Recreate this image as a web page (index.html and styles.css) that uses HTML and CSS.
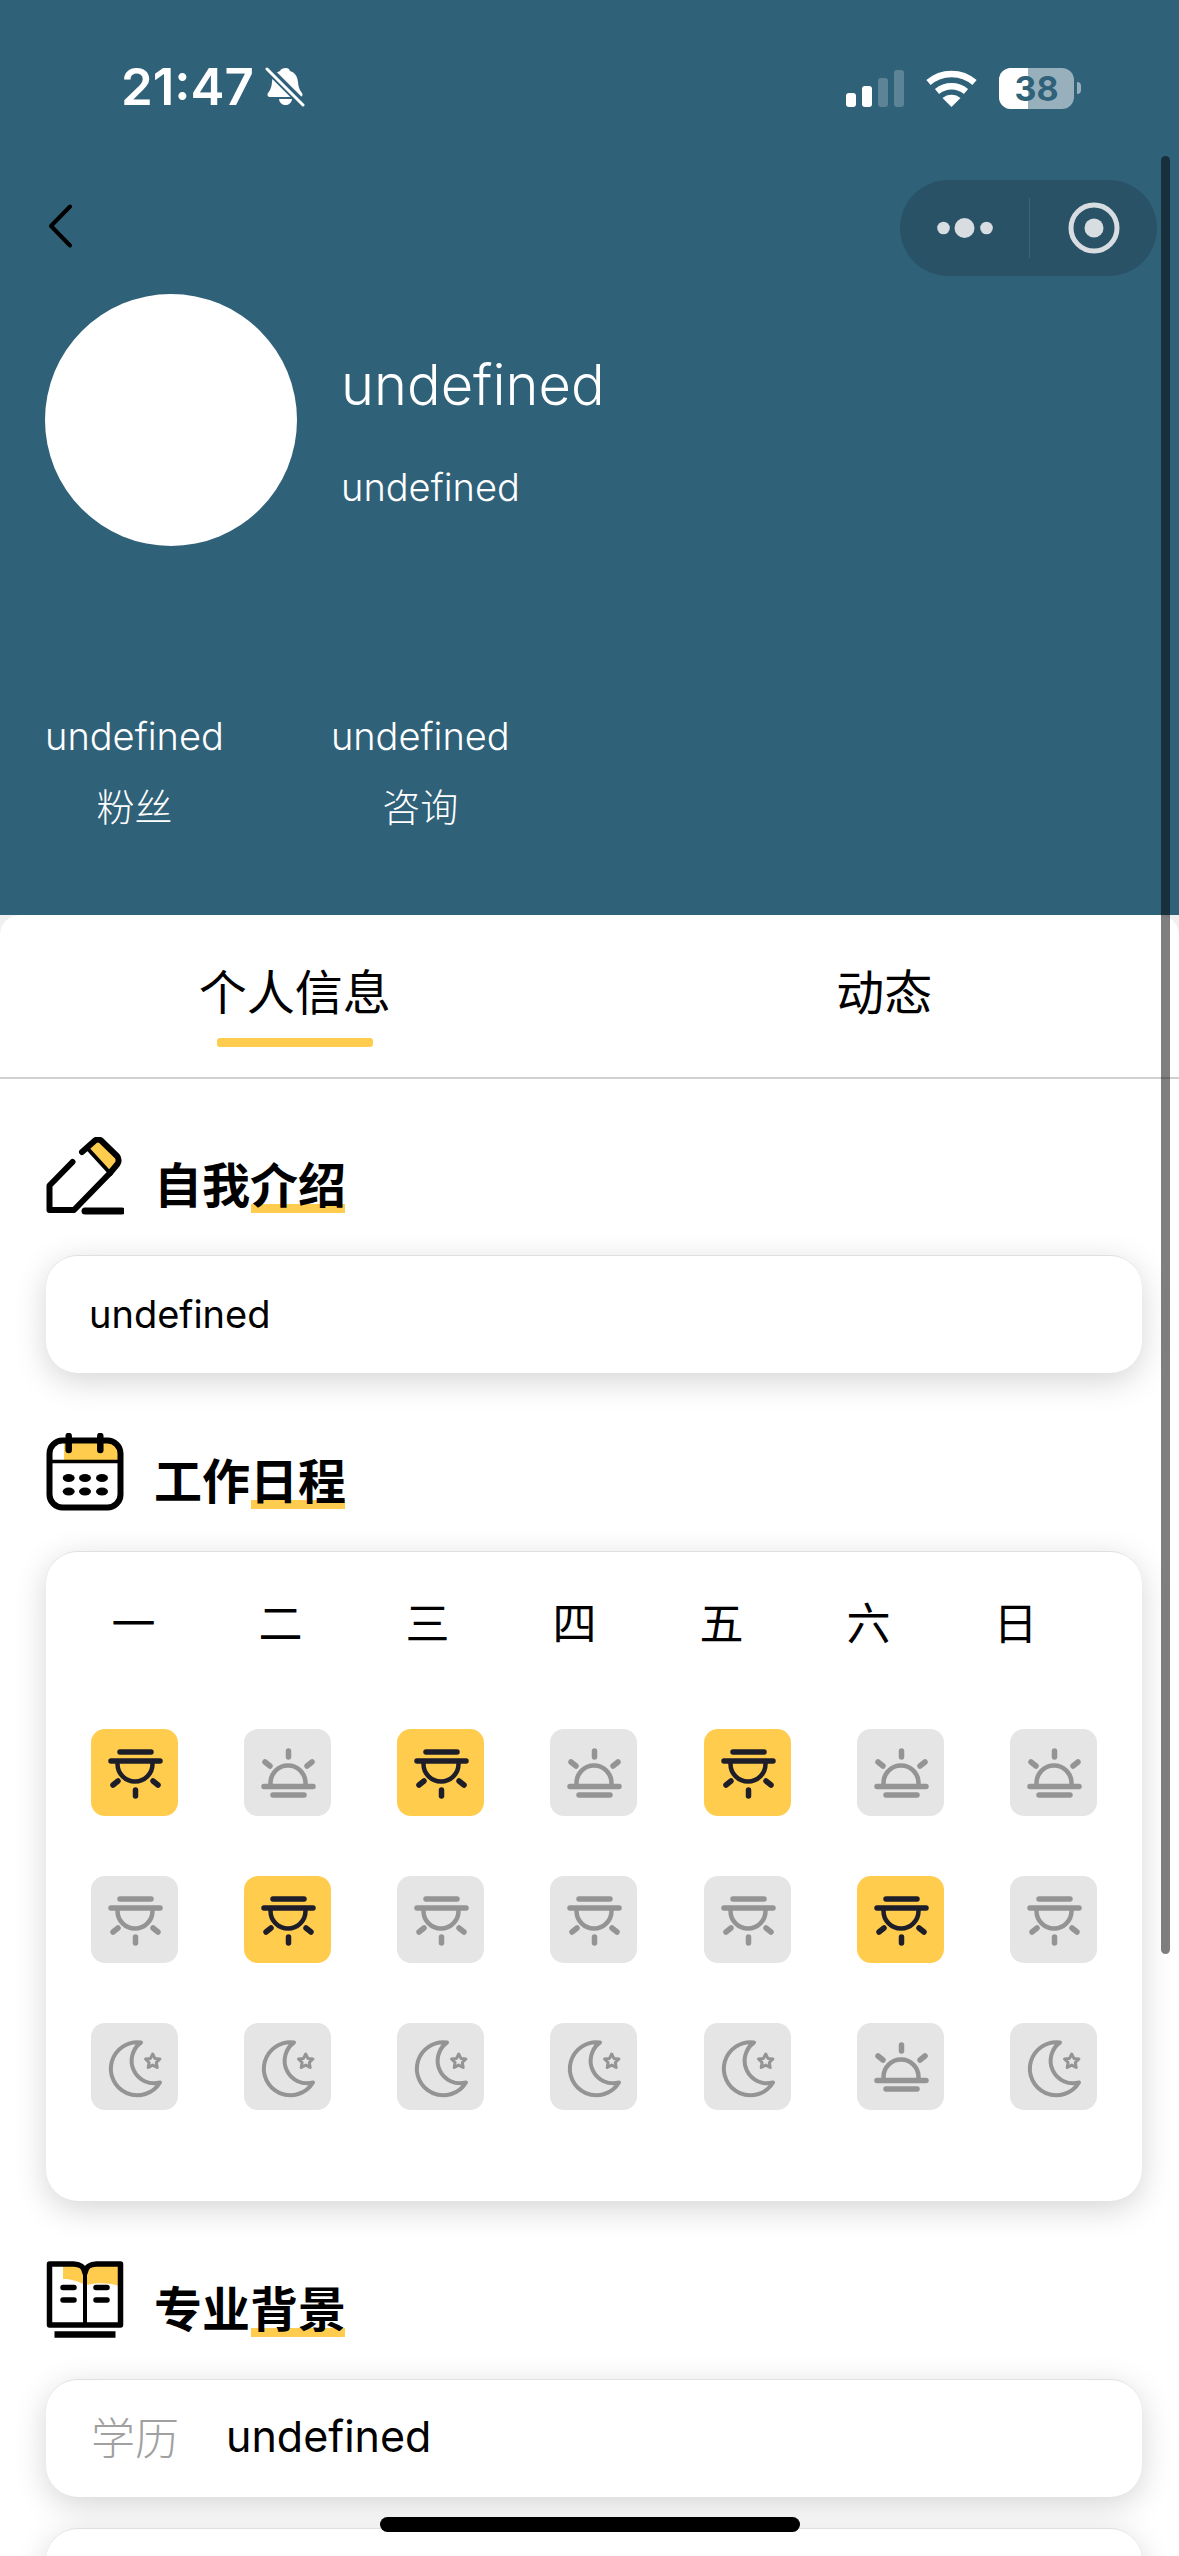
FILE: index.html
```html
<!DOCTYPE html>
<html lang="zh">
<head>
    <meta charset="UTF-8">
    <meta name="viewport" content="width=device-width, initial-scale=1.0">
    <title>undefined</title>
    <link rel="stylesheet" href="styles.css">
</head>
<body>
    <!-- Shared icons for the schedule grid -->
    <svg class="icon-defs" width="0" height="0">
        <symbol id="sunrise" viewBox="0 0 87 87">
            <g fill="none" stroke="currentColor" stroke-width="5.500" stroke-linecap="round">
                <path d="M44.500 22v6M21 33l5 4M68 33l-5 4"/>
                <path d="M26.500 57v-3a17.500 17.500 0 0 1 35 0v3" stroke-width="4.500"/>
                <path d="M20 57.500h49M29 66h31"/>
            </g>
        </symbol>
        <symbol id="sunset" viewBox="0 0 87 87">
            <g fill="none" stroke="currentColor" stroke-width="5.500" stroke-linecap="round">
                <path d="M44.500 61v6M22 56l5-4M67 56l-5-4"/>
                <path d="M26.500 32v3a17.500 17.500 0 0 0 35 0v-3" stroke-width="4.500"/>
                <path d="M20 32h49M29 23h31"/>
            </g>
        </symbol>
        <symbol id="moon" viewBox="0 0 87 87">
            <g fill="none" stroke="currentColor" stroke-width="4" stroke-linejoin="round">
                <path d="M50 19.500A26.500 26.500 0 1 0 69 59.500A22.500 22.500 0 0 1 50 19.500Z"/>
                <path d="M61.700 31l2.200 4.400 5 .6-3.600 3.500.9 5-4.500-2.400-4.500 2.400.9-5-3.600-3.500 5-.6Z" stroke-width="3"/>
            </g>
        </symbol>
    </svg>

    <div class="page">
        <!-- Top colored block -->
        <header class="hero">
            <div class="status">
                <div class="status-left">
                    <span class="time">21:47</span>
                    <svg class="bell" width="40" height="42" viewBox="0 0 40 42">
                        <path fill="#fff" d="M21 2c2 0 3.500 1.200 4 3 5 1.500 7.500 5.500 8 11 .4 5 1.500 8 4 11 1 1.500.5 4-2 4H5c-2.500 0-3-2.500-2-4 2.500-3 3.600-6 4-11 .5-5.500 3-9.500 8-11 .5-1.800 3-3 6-3Z"/>
                        <path fill="#fff" d="M14 33h13c-.5 4-3.500 6-6.500 6s-6-2-6.500-6Z"/>
                        <path stroke="#2f6179" stroke-width="8" d="M1 1l38 38"/>
                        <path stroke="#fff" stroke-width="3" stroke-linecap="round" d="M2 3l36 36"/>
                    </svg>
                </div>
                <div class="status-right">
                    <svg width="58" height="37" viewBox="0 0 58 37">
                        <rect x="0" y="23" width="10" height="14" rx="3" fill="#fff"/>
                        <rect x="16" y="16" width="10" height="21" rx="3" fill="#fff"/>
                        <rect x="32" y="8" width="10" height="29" rx="3" fill="#fff" opacity=".22"/>
                        <rect x="48" y="0" width="10" height="37" rx="3" fill="#fff" opacity=".22"/>
                    </svg>
                    <svg class="wifi" width="51" height="37" viewBox="0 0 51 37">
                        <path fill="none" stroke="#fff" stroke-width="6.500" d="M2.500 12.500C15.500 1 35.500 1 48.500 12.500M11 21.500c8.500-7 20.500-7 29 0"/>
                        <path fill="#fff" d="M25.500 37 16.500 28c5-4.500 13-4.500 18 0Z"/>
                    </svg>
                    <div class="battery">
                        <div class="battery-body">
                            <span class="battery-fill"></span>
                            <span class="battery-num">38</span>
                        </div>
                        <span class="battery-nub"></span>
                    </div>
                </div>
            </div>

            <nav class="nav">
                <svg class="back" width="26" height="44" viewBox="0 0 26 44">
                    <path d="M23 2.500 4 22l19 19.500" fill="none" stroke="#000" stroke-width="4" stroke-linecap="round" stroke-linejoin="round"/>
                </svg>
                <div class="capsule">
                    <svg class="capsule-dots" width="56" height="24" viewBox="0 0 56 24">
                        <circle cx="6.500" cy="12" r="6.300" fill="#d8dde2"/>
                        <circle cx="27.500" cy="12" r="10" fill="#d8dde2"/>
                        <circle cx="49.500" cy="12" r="6.300" fill="#d8dde2"/>
                    </svg>
                    <span class="capsule-line"></span>
                    <svg class="capsule-target" width="52" height="52" viewBox="0 0 52 52">
                        <circle cx="26" cy="26" r="23" fill="none" stroke="#d8dde2" stroke-width="5"/>
                        <circle cx="26" cy="26" r="9.500" fill="#d8dde2"/>
                    </svg>
                </div>
            </nav>

            <div class="profile">
                <div class="avatar"></div>
                <div class="profile-text">
                    <div class="profile-name">undefined</div>
                    <div class="profile-sub">undefined</div>
                </div>
            </div>

            <div class="stats">
                <div class="stat">
                    <div>undefined</div>
                    <div class="stat-label">粉丝</div>
                </div>
                <div class="stat">
                    <div>undefined</div>
                    <div class="stat-label">咨询</div>
                </div>
            </div>
        </header>

        <main class="panel">
            <div class="tabs">
                <div class="tab active"><span>个人信息</span></div>
                <div class="tab"><span>动态</span></div>
            </div>

            <div class="content">
                <!-- 自我介绍 -->
                <section class="section">
                    <div class="section-head">
                        <svg class="section-icon" viewBox="0 0 78 78">
                            <path fill="#ffcc4d" d="M43 11 53 3 72 21l-6 14Z"/>
                            <g fill="none" stroke="#000" stroke-width="6" stroke-linecap="round" stroke-linejoin="round">
                                <path d="M26.500 25 3.500 48.500v24.500h24.500L64 36"/>
                                <path d="M36 15 49 3.500c2-1.500 4-1.500 6 0L71 19c2 2 2 6 .5 8L64 36"/>
                                <path d="M42 12 64 36" stroke-width="4"/>
                            </g>
                            <path d="M39 74h37" stroke="#000" stroke-width="7" stroke-linecap="round"/>
                        </svg>
                        <h3 class="section-title"><span>自我介绍</span></h3>
                    </div>
                    <div class="card text-card">undefined</div>
                </section>

                <!-- 工作日程 -->
                <section class="section">
                    <div class="section-head">
                        <svg class="section-icon" viewBox="0 0 78 78">
                            <path fill="#ffcc4d" d="M18 10h47c5 0 8 3 8 8v10H18Z"/>
                            <rect x="3.500" y="7.500" width="71" height="67" rx="13" fill="none" stroke="#000" stroke-width="6"/>
                            <path d="M3.500 28.500h71" stroke="#000" stroke-width="3.500"/>
                            <path d="M22.700 3v14M54.300 3v14" stroke="#000" stroke-width="6.500" stroke-linecap="round"/>
                            <g fill="#000">
                                <ellipse cx="22.700" cy="45" rx="6" ry="4"/>
                                <ellipse cx="39" cy="45" rx="6" ry="4"/>
                                <ellipse cx="56" cy="45" rx="6" ry="4"/>
                                <ellipse cx="22.700" cy="58.500" rx="6" ry="4"/>
                                <ellipse cx="39" cy="58.500" rx="6" ry="4"/>
                                <ellipse cx="56" cy="58.500" rx="6" ry="4"/>
                            </g>
                        </svg>
                        <h3 class="section-title"><span>工作日程</span></h3>
                    </div>
                    <div class="card schedule">
                        <div class="weekdays">
                            <span>一</span><span>二</span><span>三</span><span>四</span><span>五</span><span>六</span><span>日</span>
                        </div>
                        <div class="slots">
                            <div class="slot on"><svg><use href="#sunset"/></svg></div>
                            <div class="slot"><svg><use href="#sunrise"/></svg></div>
                            <div class="slot on"><svg><use href="#sunset"/></svg></div>
                            <div class="slot"><svg><use href="#sunrise"/></svg></div>
                            <div class="slot on"><svg><use href="#sunset"/></svg></div>
                            <div class="slot"><svg><use href="#sunrise"/></svg></div>
                            <div class="slot"><svg><use href="#sunrise"/></svg></div>

                            <div class="slot"><svg><use href="#sunset"/></svg></div>
                            <div class="slot on"><svg><use href="#sunset"/></svg></div>
                            <div class="slot"><svg><use href="#sunset"/></svg></div>
                            <div class="slot"><svg><use href="#sunset"/></svg></div>
                            <div class="slot"><svg><use href="#sunset"/></svg></div>
                            <div class="slot on"><svg><use href="#sunset"/></svg></div>
                            <div class="slot"><svg><use href="#sunset"/></svg></div>

                            <div class="slot"><svg><use href="#moon"/></svg></div>
                            <div class="slot"><svg><use href="#moon"/></svg></div>
                            <div class="slot"><svg><use href="#moon"/></svg></div>
                            <div class="slot"><svg><use href="#moon"/></svg></div>
                            <div class="slot"><svg><use href="#moon"/></svg></div>
                            <div class="slot"><svg><use href="#sunrise"/></svg></div>
                            <div class="slot"><svg><use href="#moon"/></svg></div>
                        </div>
                    </div>
                </section>

                <!-- 专业背景 -->
                <section class="section">
                    <div class="section-head">
                        <svg class="section-icon" viewBox="0 0 78 78">
                            <path fill="#ffcc4d" d="M17 5h16c3 0 4 3 4 6v12c-5-3-13-5-20-5ZM41 5h33v20c-9-3-23-4-33-1Z"/>
                            <path d="M3.500 3h24c6 0 11 3 11.500 9 .5-6 5.500-9 11.500-9h24v61h-71Z" fill="none" stroke="#000" stroke-width="5.500" stroke-linejoin="round"/>
                            <path d="M39 10v54" stroke="#000" stroke-width="4"/>
                            <path d="M17 26.500h11M17 39h11M50 26.500h11M50 39h11" stroke="#000" stroke-width="5.500" stroke-linecap="round"/>
                            <path d="M8.500 73.500h61" stroke="#000" stroke-width="6.500"/>
                        </svg>
                        <h3 class="section-title"><span>专业背景</span></h3>
                    </div>
                    <div class="card info-row">
                        <span class="info-label">学历</span>
                        <span class="info-value">undefined</span>
                    </div>
                    <div class="card next-card"></div>
                </section>
            </div>
        </main>
        <div class="scrollbar"></div>
        <div class="home-bar"></div>
    </div>
</body>
</html>
```

FILE: styles.css
```css
* {
    box-sizing: border-box;
}

body {
    margin: 0;
    background-color: #f0f0f0;
    font-family: Inter, "Noto Sans CJK SC", sans-serif;
    color: #000;
}

.icon-defs {
    position: absolute;
}

.page {
    width: 1179px;
    height: 2556px;
    overflow: hidden;
    position: relative;
}

.hero {
    height: 915px;
    background-color: #2f6179;
    color: #fff;
}

.status {
    height: 174px;
    padding: 0 98px 0 121px;
    display: flex;
    justify-content: space-between;
    align-items: center;
}

.status-left {
    display: flex;
    align-items: center;
    gap: 11px;
}

.time {
    font-size: 51px;
    font-weight: 600;
    line-height: 60px;
}

.status-right {
    display: flex;
    align-items: flex-end;
}

.wifi {
    margin-left: 22px;
}

.battery {
    display: flex;
    align-items: center;
    margin-left: 22px;
    margin-bottom: -2px;
}

.battery-body {
    width: 75px;
    height: 41px;
    border-radius: 12px;
    background-color: rgba(255, 255, 255, 0.5);
    position: relative;
    overflow: hidden;
    display: flex;
    justify-content: center;
    align-items: center;
}

.battery-fill {
    position: absolute;
    left: 0;
    top: 0;
    bottom: 0;
    width: 29px;
    background-color: #fff;
}

.battery-num {
    position: relative;
    font-size: 34px;
    font-weight: 700;
    line-height: 41px;
    color: #2f6179;
}

.battery-nub {
    width: 4px;
    height: 12px;
    margin-left: 3px;
    border-radius: 0 6px 6px 0;
    background-color: rgba(255, 255, 255, 0.5);
}

.nav {
    height: 96px;
    margin-top: 6px;
    padding: 0 22px 0 47px;
    display: flex;
    justify-content: space-between;
    align-items: center;
}

.back {
    margin-bottom: 5px;
}

.capsule {
    width: 257px;
    height: 96px;
    border-radius: 48px;
    background-color: #2a5267;
    display: flex;
    align-items: center;
    padding-left: 37px;
}

.capsule-line {
    width: 1px;
    height: 60px;
    margin-left: 36px;
    background-color: #3d6478;
}

.capsule-target {
    margin-left: 38px;
}

.profile {
    display: flex;
    margin-top: 18px;
    padding-left: 45px;
}

.avatar {
    width: 252px;
    height: 252px;
    border-radius: 50%;
    background-color: #fff;
}

.profile-text {
    margin-left: 44px;
    padding-top: 56px;
}

.profile-name {
    font-size: 56px;
    line-height: 70px;
    font-weight: 300;
}

.profile-sub {
    margin-top: 42px;
    font-size: 38px;
    line-height: 50px;
    font-weight: 300;
}

.stats {
    display: flex;
    gap: 107px;
    margin-top: 165px;
    padding-left: 45px;
    font-size: 38px;
    line-height: 50px;
    font-weight: 300;
}

.stat {
    text-align: center;
}

.stat-label {
    margin-top: 21px;
}

.panel {
    background-color: #fff;
    border-radius: 20px 20px 0 0;
}

.tabs {
    height: 164px;
    display: flex;
    border-bottom: 2px solid #d0d0d0;
}

.tab {
    flex: 1;
    text-align: center;
    padding-top: 48px;
    font-size: 48px;
    line-height: 60px;
}

.tab span {
    display: inline-block;
    position: relative;
}

.tab.active span::after {
    content: "";
    position: absolute;
    left: 50%;
    top: 75px;
    width: 156px;
    height: 9px;
    margin-left: -78px;
    border-radius: 3px;
    background-color: #ffcc4d;
}

.content {
    padding: 58px 37px 0 46px;
}

.section {
    margin-bottom: 60px;
}

.section-head {
    display: flex;
    align-items: flex-end;
    height: 78px;
    margin-bottom: 40px;
}

.section-icon {
    width: 78px;
    height: 78px;
    flex-shrink: 0;
}

.section-title {
    margin: 0 0 -1px 30px;
    position: relative;
    font-size: 48px;
    line-height: 60px;
    font-weight: 700;
}

.section-title span {
    position: relative;
}

.section-title::before {
    content: "";
    position: absolute;
    right: 1px;
    bottom: 3px;
    width: 49%;
    height: 9px;
    background-color: #ffcc4d;
}

.card {
    background-color: #fff;
    border-top: 1px solid #e0e0e0;
    border-radius: 32px;
    box-shadow: 0 8px 32px rgba(0, 0, 0, 0.17);
}

.text-card {
    height: 118px;
    padding-left: 43px;
    font-size: 38px;
    line-height: 116px;
    font-weight: 400;
}

.schedule {
    height: 650px;
    padding: 0 45px;
}

.weekdays {
    display: grid;
    grid-template-columns: repeat(7, 147px);
    margin-left: -31px;
    padding-top: 42px;
    text-align: center;
    font-size: 44px;
    line-height: 60px;
}

.slots {
    display: grid;
    grid-template-columns: repeat(7, 87px);
    justify-content: space-between;
    row-gap: 60px;
    margin-top: 75px;
}

.slot {
    width: 87px;
    height: 87px;
    border-radius: 14px;
    background-color: #e5e5e5;
    color: #949494;
}

.slot svg {
    display: block;
    width: 87px;
    height: 87px;
}

.slot.on {
    background-color: #ffcc4d;
    color: #1e1e2a;
}

.info-row {
    height: 118px;
    padding: 0 0 5px 45px;
    display: flex;
    align-items: center;
    gap: 47px;
    font-size: 43px;
}

.info-label {
    font-size: 44px;
    color: #a0a0a0;
    font-weight: 300;
}

.next-card {
    height: 118px;
    margin-top: 31px;
}

.scrollbar {
    position: absolute;
    left: 1161px;
    top: 156px;
    width: 9px;
    height: 1798px;
    border-radius: 5px;
    background-color: rgba(0, 0, 0, 0.5);
}

.home-bar {
    position: absolute;
    left: 380px;
    top: 2517px;
    width: 420px;
    height: 15px;
    border-radius: 8px;
    background-color: #000;
}
```
